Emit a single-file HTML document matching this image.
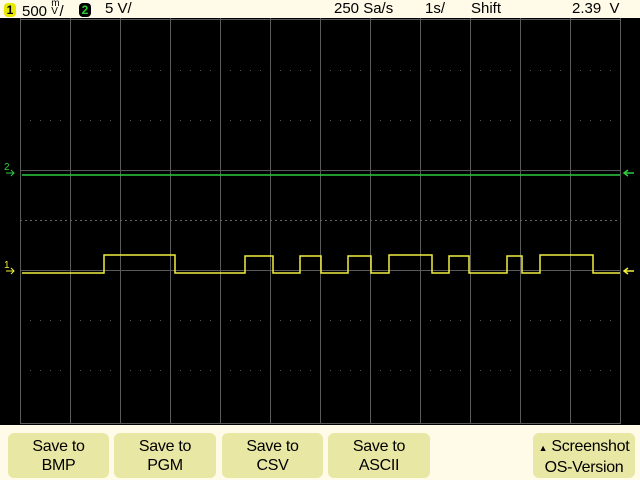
<!DOCTYPE html>
<html><head><style>
body{margin:0;width:640px;height:480px;background:#fffbe8;overflow:hidden;font-family:"Liberation Sans",sans-serif;position:relative}
.hd{position:absolute;top:0;font-size:15px;line-height:18px;color:#000}
.btn{position:absolute;top:433px;height:45px;background:#e8e7a4;border-radius:6px;text-align:center;font-size:16px;line-height:19px;padding-top:4px;box-sizing:border-box;color:#000;letter-spacing:-0.3px}
</style></head><body>
<div class="hd" style="left:4px"><span style="display:inline-block;width:12px;height:14px;background:#e8e800;border-radius:4px;text-align:center;font-size:12px;line-height:14px;font-weight:bold;vertical-align:-1px">1</span></div>
<div class="hd" style="left:22px">500 <span style="font-size:10px;display:inline-block;line-height:8px;vertical-align:2px">m<br>V</span>/</div>
<div class="hd" style="left:79px"><span style="display:inline-block;width:12px;height:14px;background:#000;color:#2ecc2e;border-radius:4px;text-align:center;font-size:12px;line-height:14px;font-weight:bold;vertical-align:-1px">2</span></div>
<div class="hd" style="left:105px">5 V/</div>
<div class="hd" style="left:334px">250 Sa/s</div>
<div class="hd" style="left:425px">1s/</div>
<div class="hd" style="left:471px">Shift</div>
<div class="hd" style="left:572px">2.39 &nbsp;V</div>
<svg style="position:absolute;left:0;top:18px" width="640" height="407" viewBox="0 18 640 407">
<rect x="0" y="18" width="640" height="407" fill="#000"/>
<g stroke="#5a5a5a" stroke-width="1">
<path d="M20.5 18V424M70.5 18V424M120.5 18V424M170.5 18V424M220.5 18V424M270.5 18V424M320.5 18V424M370.5 18V424M420.5 18V424M470.5 18V424M520.5 18V424M570.5 18V424M620.5 18V424"/>
<path d="M20 19.5H620M20 423.5H620M20 170.5H620M20 270.5H620"/>
</g>
<g stroke="#555" stroke-width="1" stroke-dasharray="1 9">
<path d="M20 70.5H620M20 120.5H620M20 320.5H620M20 370.5H620"/>
</g>
<path d="M20 220.5H620" stroke="#666" stroke-dasharray="2 3"/>
<path d="M22 175H620" stroke="#2ecc40" stroke-width="1.5"/>
<path d="M22 273H104V255H175V273H245V256H273V273H300V256H321V273H348V256H371V273H389V255H432V273H449V256H469V273H507V256H522V273H540V255H593V273H620" stroke="#f0f040" stroke-width="1.5" fill="none"/>
<text x="4" y="170" fill="#2ecc40" font-size="10" font-family="Liberation Sans">2</text>
<path d="M6 173H14M11 170L14 173L11 176" stroke="#2ecc40" fill="none"/>
<text x="4" y="268" fill="#f0f040" font-size="10" font-family="Liberation Sans">1</text>
<path d="M6 271H14M11 268L14 271L11 274" stroke="#f0f040" fill="none"/>
<path d="M634 173H624M628 170L624 173L628 176" stroke="#2ecc40" stroke-width="1.5" fill="none"/>
<path d="M634 271H624M628 268L624 271L628 274" stroke="#f0f040" stroke-width="1.5" fill="none"/>
</svg>
<div class="btn" style="left:8px;width:101px">Save to<br>BMP</div>
<div class="btn" style="left:114px;width:102px">Save to<br>PGM</div>
<div class="btn" style="left:222px;width:101px">Save to<br>CSV</div>
<div class="btn" style="left:328px;width:102px">Save to<br>ASCII</div>
<div class="btn" style="left:533px;width:102px"><span style="font-size:9px">▲</span> Screenshot<br>OS-Version</div>
</body></html>
